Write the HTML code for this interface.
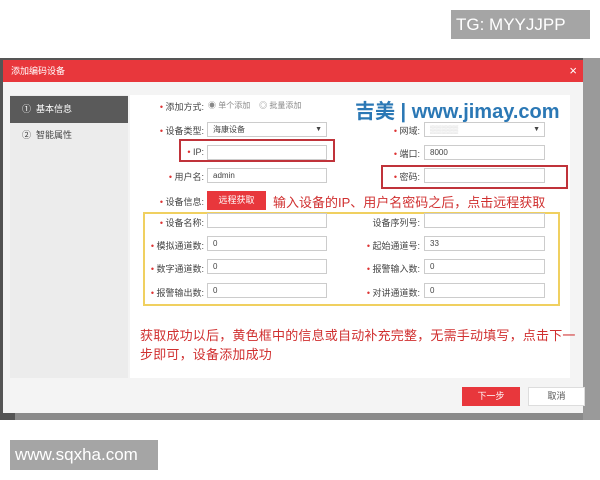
<!DOCTYPE html>
<html><head><meta charset="utf-8"><style>
*{margin:0;padding:0;box-sizing:border-box}
body{width:600px;height:480px;background:#fff;position:relative;overflow:hidden;font-family:"Liberation Sans","Noto Sans CJK SC",sans-serif;}
.a{position:absolute}
.lbl{position:absolute;font-size:9px;color:#444;text-align:right;white-space:nowrap}
.lbl b{color:#d33;font-weight:normal}
.in{position:absolute;height:15px;border:1px solid #ccc;background:#fff;font-size:8px;color:#444;padding-left:5px;line-height:13px}
</style></head><body>
<div class="a" style="left:451px;top:10px;width:139px;height:29px;background:#a5a5a5;color:#fff;font-size:17px;line-height:29px;padding-left:5px">TG: MYYJJPP</div>
<div class="a" style="left:0;top:58px;width:600px;height:362px;background:#555"></div>
<div class="a" style="left:583px;top:58px;width:17px;height:362px;background:#9a9a9a"></div>
<div class="a" style="left:15px;top:413px;width:568px;height:7px;background:#8a8a8a"></div>
<div class="a" style="left:3px;top:60px;width:580px;height:353px;background:#f4f4f4"></div>
<div class="a" style="left:3px;top:60px;width:580px;height:22px;background:#e8373c;color:#fff;font-size:9px;line-height:22px;padding-left:8px">添加编码设备<span style="position:absolute;right:6px;top:0;font-size:13px">×</span></div>
<div class="a" style="left:10px;top:95px;width:118px;height:283px;background:#ececec"></div>
<div class="a" style="left:10px;top:96px;width:118px;height:27px;background:#5a5a5a;color:#fff;font-size:9px;line-height:27px;padding-left:12px">① &nbsp;基本信息</div>
<div class="a" style="left:10px;top:123px;width:118px;height:25px;color:#444;font-size:9px;line-height:25px;padding-left:12px">② &nbsp;智能属性</div>
<div class="a" style="left:130px;top:95px;width:440px;height:283px;background:#fff"></div>
<div class="lbl" style="left:140px;top:100px;width:64px"><b>•</b> 添加方式:</div>
<div class="a" style="left:208px;top:100px;font-size:8px;color:#888">◉ 单个添加 &nbsp;&nbsp;&nbsp;◎ 批量添加</div>
<div class="a" style="left:355px;top:95px;font-size:20px;font-weight:bold;color:#2b78b5;white-space:nowrap">吉美 | www.jimay.com</div>
<div class="lbl" style="left:140px;top:124px;width:64px"><b>•</b> 设备类型:</div>
<div class="in" style="left:207px;top:122px;width:120px">海康设备<span style="position:absolute;right:4px;font-size:7px">▼</span></div>
<div class="a" style="left:179px;top:139px;width:156px;height:23px;border:2px solid #c0333a"></div>
<div class="lbl" style="left:140px;top:147px;width:64px"><b>•</b> IP:</div>
<div class="in" style="left:207px;top:145px;width:120px"></div>
<div class="lbl" style="left:140px;top:170px;width:64px"><b>•</b> 用户名:</div>
<div class="in" style="left:207px;top:168px;width:120px">admin</div>
<div class="lbl" style="left:140px;top:195px;width:64px"><b>•</b> 设备信息:</div>
<div class="a" style="left:207px;top:191px;width:59px;height:19px;background:#e8373c;color:#fff;font-size:9px;line-height:19px;text-align:center">远程获取</div>
<div class="a" style="left:273px;top:192px;font-size:13px;color:#d03030;white-space:nowrap">输入设备的IP、用户名密码之后，点击远程获取</div>
<div class="lbl" style="left:356px;top:124px;width:64px"><b>•</b> 网域:</div>
<div class="in" style="left:424px;top:122px;width:121px;color:#ccc">▒▒▒▒▒<span style="position:absolute;right:4px;font-size:7px;color:#444">▼</span></div>
<div class="lbl" style="left:356px;top:147px;width:64px"><b>•</b> 端口:</div>
<div class="in" style="left:424px;top:145px;width:121px">8000</div>
<div class="a" style="left:381px;top:165px;width:187px;height:24px;border:2px solid #c0333a"></div>
<div class="lbl" style="left:356px;top:170px;width:64px"><b>•</b> 密码:</div>
<div class="in" style="left:424px;top:168px;width:121px"></div>
<div class="a" style="left:143px;top:212px;width:417px;height:94px;border:2px solid #f0d060"></div>
<div class="lbl" style="left:140px;top:216px;width:64px"><b>•</b> 设备名称:</div><div class="in" style="left:207px;top:213px;width:120px"></div>
<div class="lbl" style="left:140px;top:239px;width:64px"><b>•</b> 模拟通道数:</div><div class="in" style="left:207px;top:236px;width:120px">0</div>
<div class="lbl" style="left:140px;top:262px;width:64px"><b>•</b> 数字通道数:</div><div class="in" style="left:207px;top:259px;width:120px">0</div>
<div class="lbl" style="left:140px;top:286px;width:64px"><b>•</b> 报警输出数:</div><div class="in" style="left:207px;top:283px;width:120px">0</div>
<div class="lbl" style="left:356px;top:216px;width:64px">设备序列号:</div><div class="in" style="left:424px;top:213px;width:121px"></div>
<div class="lbl" style="left:356px;top:239px;width:64px"><b>•</b> 起始通道号:</div><div class="in" style="left:424px;top:236px;width:121px">33</div>
<div class="lbl" style="left:356px;top:262px;width:64px"><b>•</b> 报警输入数:</div><div class="in" style="left:424px;top:259px;width:121px">0</div>
<div class="lbl" style="left:356px;top:286px;width:64px"><b>•</b> 对讲通道数:</div><div class="in" style="left:424px;top:283px;width:121px">0</div>
<div class="a" style="left:140px;top:326px;width:470px;font-size:13px;line-height:19px;color:#d03030;white-space:nowrap;letter-spacing:0.2px">获取成功以后，黄色框中的信息或自动补充完整，无需手动填写，点击下一<br>步即可，设备添加成功</div>
<div class="a" style="left:462px;top:387px;width:58px;height:19px;background:#e8373c;color:#fff;font-size:9px;line-height:19px;text-align:center">下一步</div>
<div class="a" style="left:528px;top:387px;width:57px;height:19px;background:#fff;border:1px solid #ddd;color:#555;font-size:9px;line-height:17px;text-align:center">取消</div>
<div class="a" style="left:10px;top:440px;width:148px;height:30px;background:#a5a5a5;color:#fff;font-size:17px;line-height:30px;padding-left:5px">www.sqxha.com</div>
</body></html>
